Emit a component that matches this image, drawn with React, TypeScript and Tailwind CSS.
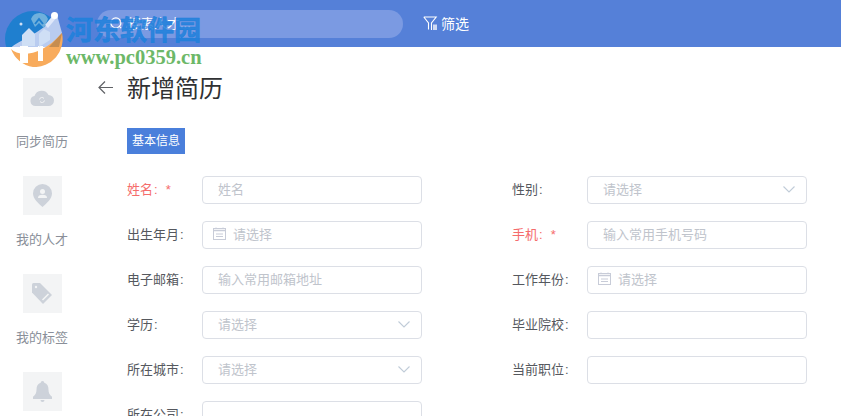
import { Search } from "lucide-react";

const font = "font-['Liberation_Sans','Noto_Sans_CJK_SC',sans-serif]";

function CloudIcon() {
  return (
    <svg width="24" height="16" viewBox="0 0 24 16">
      <path d="M5.500 16a5 5 0 0 1-1-9.900A7.500 7.500 0 0 1 18.500 5 5.500 5.500 0 0 1 18.500 16z" fill="#cdd2da" />
      <path d="M9.500 9.500a2.500 2.500 0 0 1 4.500-1M14.500 10.500a2.500 2.500 0 0 1-4.500 1" fill="none" stroke="#f3f4f5" strokeWidth="1" />
    </svg>
  );
}

function PinIcon() {
  return (
    <svg width="19" height="23" viewBox="0 0 19 23">
      <path d="M9.500 0A9.500 9.500 0 0 1 19 9.500c0 5-5 9.500-9.500 13.500C5 19 0 14.500 0 9.500A9.500 9.500 0 0 1 9.500 0z" fill="#cdd2da" />
      <circle cx="9.500" cy="7.500" r="2.500" fill="#f3f4f5" />
      <path d="M5 14c0-2.500 1.500-3.200 4.500-3.200S14 11.500 14 14z" fill="#f3f4f5" />
    </svg>
  );
}

function TagIcon() {
  return (
    <svg width="20" height="21" viewBox="0 0 20 21">
      <path d="M0 1.500Q0 0 1.500 0H8l12 12-9 9L0 9.500z" fill="#cdd2da" />
      <circle cx="4" cy="4" r="1.200" fill="#f3f4f5" />
      <path d="M10.500 17L16.500 11" stroke="#f3f4f5" strokeWidth="1.600" />
    </svg>
  );
}

function BellIcon() {
  return (
    <svg width="19" height="22" viewBox="0 0 19 22">
      <path d="M9.500 0a1.800 1.800 0 0 1 1.800 1.800c3 1 4.200 3.500 4.200 7 0 3 1 5 3.500 7V18H0v-2.200c2.500-2 3.500-4 3.500-7 0-3.500 1.200-6 4.200-7A1.800 1.800 0 0 1 9.500 0z" fill="#cdd2da" />
      <path d="M7.500 19h4a2 2 0 0 1-4 0z" fill="#cdd2da" />
    </svg>
  );
}

function FilterIcon() {
  return (
    <svg width="15" height="15" viewBox="0 0 15 15" fill="none" stroke="#fff" strokeWidth="1.100">
      <path d="M.8 1h12.400L8.500 7v7M5.500 13.500V7L.8 1" />
      <rect x="10" y="8.500" width="4" height="5.500" fill="#cfdaf3" stroke="none" />
    </svg>
  );
}

function DateIcon() {
  return (
    <svg width="13" height="13" viewBox="0 0 13 13" fill="none" stroke="#c8ccd8" className="ml-[10px] mb-[3px] shrink-0">
      <rect x=".5" y="1.500" width="12" height="11" />
      <path d="M1 3.500h11" strokeWidth="1.500" />
      <path d="M3 .5v1.500M10 .5v1.500M3 7h7M3 9.500h7" />
    </svg>
  );
}

function SelectArrow() {
  return (
    <svg width="12" height="7" viewBox="0 0 12 7" fill="none" stroke="#c0ccd8" strokeWidth="1.100" className="ml-auto mr-[11px] mb-px">
      <path d="M.5.5L6 6l5.500-5.500" />
    </svg>
  );
}

function BackArrow() {
  return (
    <svg width="15" height="13" viewBox="0 0 15 13" fill="none" stroke="#606266" strokeWidth="1.200" className="ml-px mb-[3px]">
      <path d="M15 6.500H1M7 .5l-6 6 6 6" />
    </svg>
  );
}

function Logo() {
  return (
    <svg width="58" height="56" viewBox="0 0 58 56" className="absolute left-[5px] top-[11px]">
      <circle cx="28" cy="28" r="28" fill="#1f7fcf" />
      <path d="M3 40C12 28 30 28 52 4l5 18C50 38 36 48 14 48z" fill="#b9ccf0" />
      <path d="M0 36h58v20H0z" fill="#fff" />
      <path d="M6 38c8 8 30 8 51-16a28 28 0 0 1-29 34A28 28 0 0 1 6 38z" fill="#f8ab5c" />
      <path d="M57 22l-3 14H44z" fill="#c68d50" />
      <path d="M15 35h8v17h-8zM33 35h5v15h-5z" fill="#fff" />
      <path d="M17 35V24l7-7 6 6v12z" fill="#cfdff5" />
      <path d="M34 36V23l5-5 6 3v8z" fill="#cfdff5" />
      <path d="M26 8a9 9 0 0 1 17 0l-4 9-5-5-4 4z" fill="#6fb0dc" />
      <path d="M30 13l4-5 4 5" fill="none" stroke="#1f7fcf" strokeWidth="2" />
      <path d="M40 14l9-11 3 3-9 11z" fill="#dfe8fa" />
      <circle cx="49.500" cy="4.500" r="3.500" fill="#fff" />
      <circle cx="16" cy="13" r="1.500" fill="#cfdff5" />
    </svg>
  );
}

const sideItems = [
  { id: "sync", label: "同步简历", icon: <CloudIcon /> },
  { id: "talent", label: "我的人才", icon: <PinIcon /> },
  { id: "tags", label: "我的标签", icon: <TagIcon /> },
  { id: "notice", label: "", icon: <BellIcon /> },
];

type Field = {
  label: string;
  placeholder?: string;
  required?: boolean;
  kind?: "select" | "date";
};

const fields: Field[] = [
  { label: "姓名", placeholder: "姓名", required: true },
  { label: "性别", placeholder: "请选择", kind: "select" },
  { label: "出生年月", placeholder: "请选择", kind: "date" },
  { label: "手机", placeholder: "输入常用手机号码", required: true },
  { label: "电子邮箱", placeholder: "输入常用邮箱地址" },
  { label: "工作年份", placeholder: "请选择", kind: "date" },
  { label: "学历", placeholder: "请选择", kind: "select" },
  { label: "毕业院校" },
  { label: "所在城市", placeholder: "请选择", kind: "select" },
  { label: "当前职位" },
  { label: "所在公司" },
];

function FormField({ field }: { field: Field }) {
  return (
    <div className="flex items-center h-7 w-[295px]">
      <div className={`w-[75px] shrink-0 text-[13px] ${field.required ? "text-[#f56c6c]" : "text-[#55585e]"}`}>
        {field.label}
        <span className="ml-px">:</span>
        {field.required && <span className="ml-[8px]">*</span>}
      </div>
      <div className="flex items-center w-[220px] h-7 shrink-0 rounded border border-[#dcdfe6] bg-white text-[13px] text-[#c0c4cc]">
        {field.kind === "date" ? (
          <>
            <DateIcon />
            <span className="ml-[7px]">{field.placeholder}</span>
          </>
        ) : (
          <span className="ml-[15px]">{field.placeholder}</span>
        )}
        {field.kind === "select" && <SelectArrow />}
      </div>
    </div>
  );
}

export default function App() {
  return (
    <div className={`relative h-[416px] w-[841px] overflow-hidden bg-white ${font}`}>
      {/* Top bar */}
      <header className="flex items-center h-[47px] pl-[97px] bg-[#5580d8]">
        <div className="flex items-center w-[306px] h-7 rounded-full bg-[#7b9ae2] pl-[12px] text-[13px] text-white">
          <Search size={15} strokeWidth={2} />
          <span className="ml-[4px]">搜索人才...</span>
        </div>
        <div className="flex items-center ml-5 text-sm text-white">
          <FilterIcon />
          <span className="ml-[3px]">筛选</span>
        </div>
      </header>

      <div className="flex">
        {/* Sidebar */}
        <aside className="w-[84px] shrink-0 pt-[31px] flex flex-col gap-[24px] items-center">
          {sideItems.map((item) => (
            <div key={item.id} className="flex flex-col items-center w-[84px]">
              <div className="flex items-center justify-center w-[39px] h-[39px] bg-[#f3f4f5]">{item.icon}</div>
              <div className="mt-[15px] h-[20px] text-[13px] leading-[20px] text-[#8a8f99]">{item.label}</div>
            </div>
          ))}
        </aside>

        {/* Main form */}
        <main className="flex-1 pl-[13px]">
          <div className="flex items-center h-[34px] mt-[25px]">
            <BackArrow />
            <h1 className="ml-[14px] text-2xl font-normal text-[#303133]">新增简历</h1>
          </div>
          <div className="ml-[30px] mt-[22px] w-[58px] h-[26px] flex items-center justify-center bg-[#4a7fdb] text-xs text-white">
            基本信息
          </div>
          <div className="ml-[30px] mt-[22px] grid grid-cols-[295px_295px] gap-x-[90px] gap-y-[17px]">
            {fields.map((field) => (
              <FormField key={field.label} field={field} />
            ))}
          </div>
        </main>
      </div>

      {/* Site watermark */}
      <Logo />
      <div className="absolute left-[66px] top-[13px] text-[27px] leading-[32px] font-bold text-[#1e80dc]/85 [-webkit-text-stroke:0.6px_#1e80dc] font-['Noto_Sans_CJK_SC',serif]">
        河东软件园
      </div>
      <div className="absolute left-[66px] top-[46px] text-[20.5px] leading-[22px] font-bold text-[#6db868] font-['Liberation_Serif',serif]">
        www.pc0359.cn
      </div>
    </div>
  );
}
